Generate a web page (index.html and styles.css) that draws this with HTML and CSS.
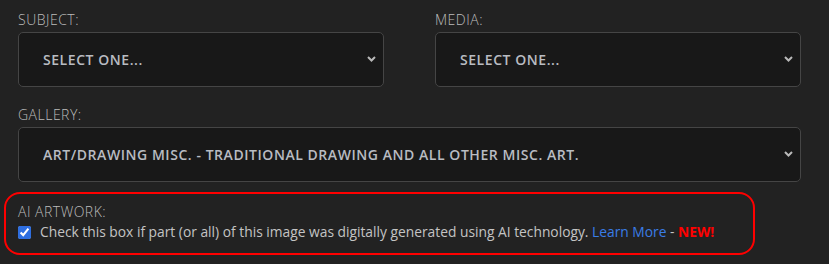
FILE: index.html
```html
<!DOCTYPE html>
<html lang="en">
<head>
<meta charset="utf-8">
<title>Upload form</title>
<link rel="stylesheet" href="styles.css">
</head>
<body>
<form class="form">
  <div class="row two">
    <div class="field">
      <label class="label" for="subject">SUBJECT:</label>
      <div class="select-wrap">
        <select id="subject" class="select"><option>SELECT ONE...</option></select>
        <svg class="chev" width="9" height="6" viewBox="0 0 9 6"><path d="M1 1l3.5 3.5L8 1" fill="none" stroke="#b9b9b9" stroke-width="2"/></svg>
      </div>
    </div>
    <div class="field">
      <label class="label" for="media">MEDIA:</label>
      <div class="select-wrap">
        <select id="media" class="select"><option>SELECT ONE...</option></select>
        <svg class="chev" width="9" height="6" viewBox="0 0 9 6"><path d="M1 1l3.5 3.5L8 1" fill="none" stroke="#b9b9b9" stroke-width="2"/></svg>
      </div>
    </div>
  </div>
  <div class="row">
    <div class="field">
      <label class="label" for="gallery">GALLERY:</label>
      <div class="select-wrap">
        <select id="gallery" class="select"><option>ART/DRAWING MISC. - TRADITIONAL DRAWING AND ALL OTHER MISC. ART.</option></select>
        <svg class="chev" width="9" height="6" viewBox="0 0 9 6"><path d="M1 1l3.5 3.5L8 1" fill="none" stroke="#b9b9b9" stroke-width="2"/></svg>
      </div>
    </div>
  </div>
  <div class="ai-box">
    <div class="label">AI ARTWORK:</div>
    <label class="check">
      <input type="checkbox" checked>
      <span>Check this box if part (or all) of this image was digitally generated using AI technology. <a href="#" class="link">Learn More</a> - <b class="new">NEW!</b></span>
    </label>
  </div>
</form>
</body>
</html>
```
FILE: styles.css
```css
html, body {
  margin: 0;
  padding: 0;
  background: #222222;
}
body {
  font-family: "Open Sans", "Lato", sans-serif;
  color: #c4c4c4;
}
.form {
  padding: 9px 0 0 18px;
  width: 783px;
}
.row {
  margin-bottom: 17px;
}
.row + .row {
  margin-bottom: 10px;
}
.row.two {
  display: grid;
  grid-template-columns: 366px 366px;
  column-gap: 51px;
}
.field {
  display: flex;
  flex-direction: column;
}
.label {
  font-size: 14px;
  line-height: 21px;
  color: #bcbcbc;
  font-weight: 300;
  letter-spacing: 0.5px;
  margin-bottom: 2px;
}
.select-wrap {
  position: relative;
}
.select {
  appearance: none;
  -webkit-appearance: none;
  width: 100%;
  height: 55px;
  box-sizing: border-box;
  background: #181818;
  border: 1px solid #454545;
  border-radius: 5px;
  color: #b9bcc2;
  font-family: inherit;
  font-size: 14px;
  font-weight: 600;
  letter-spacing: 0.55px;
  padding: 0 24px;
  outline: none;
}
.chev {
  position: absolute;
  right: 8px;
  top: 24px;
}
.ai-box {
  margin: 0 0 0 -14px;
  width: 751px;
  box-sizing: border-box;
  border: 2px solid #ff0000;
  border-radius: 16px;
  padding: 7px 12px 0 12px;
  height: 63px;
}
.ai-box .label {
  margin-bottom: 0;
}
.check {
  display: flex;
  align-items: center;
  font-size: 13.8px;
  line-height: 20px;
  color: #c4c4c4;
}
.check input {
  margin: 0 9px 0 0;
  width: 13px;
  height: 13px;
  accent-color: #2e6ee0;
}
.link {
  color: #3a7de6;
  text-decoration: none;
}
.new {
  color: #ff0000;
  font-weight: 700;
}
```
